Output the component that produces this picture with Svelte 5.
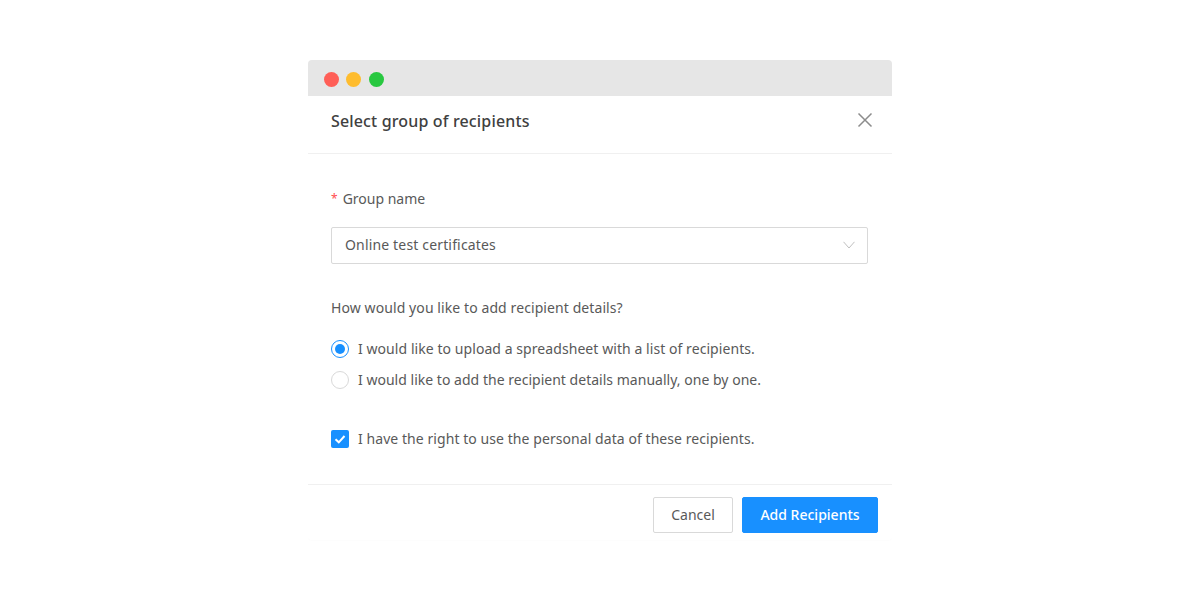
<script>
  const dots = ['red', 'amber', 'green'];
</script>

<div class="page">
  <div class="window">
    <div class="bar">
      {#each dots as d}
        <span class="dot {d}"></span>
      {/each}
    </div>
    <header class="head">
      <h1>Select group of recipients</h1>
      <svg class="close" width="16" height="16" viewBox="0 0 16 16" aria-hidden="true">
        <path d="M1.5 1.5 L14.5 14.5 M14.5 1.5 L1.5 14.5" stroke="#8c8c8c" stroke-width="1.5" fill="none" />
      </svg>
    </header>
    <main class="body">
      <div class="label"><span class="star">*</span>Group name</div>
      <div class="select">
        <span class="value">Online test certificates</span>
        <svg width="12" height="8" viewBox="0 0 12 8" aria-hidden="true">
          <path d="M0.5 0.8 L6 7 L11.5 0.8" stroke="#bfbfbf" stroke-width="1" fill="none" />
        </svg>
      </div>
      <p class="question">How would you like to add recipient details?</p>
      <div class="radios">
        <div class="option">
          <span class="radio on"></span>
          <span>I would like to upload a spreadsheet with a list of recipients.</span>
        </div>
        <div class="option tight">
          <span class="radio"></span>
          <span>I would like to add the recipient details manually, one by one.</span>
        </div>
      </div>
      <div class="option check-row">
        <span class="check">
          <svg width="18" height="18" viewBox="0 0 18 18" aria-hidden="true">
            <path d="M4.5 9.2 L7.8 12.3 L13.5 6" stroke="#fff" stroke-width="2" fill="none" />
          </svg>
        </span>
        <span class="check-text">I have the right to use the personal data of these recipients.</span>
      </div>
    </main>
    <footer class="foot">
      <button class="btn">Cancel</button>
      <button class="btn primary">Add Recipients</button>
    </footer>
  </div>
</div>

<style>
  :global(body) {
    margin: 0;
    background: #fff;
  }
  .page {
    width: 1200px;
    height: 600px;
    display: flex;
    justify-content: center;
    padding-top: 60px;
    box-sizing: border-box;
    font-family: "Noto Sans", sans-serif;
    font-size: 14px;
    color: #595959;
  }
  .window {
    width: 584px;
    height: 480px;
    background: #fff;
    border-radius: 4px;
    display: flex;
    flex-direction: column;
    box-shadow: 0 1px 2px rgba(0, 0, 0, 0.012);
  }
  .bar {
    height: 36px;
    flex: none;
    background: #e6e6e6;
    border-radius: 4px 4px 0 0;
    display: flex;
    align-items: center;
    gap: 7.5px;
    padding-left: 15.5px;
    padding-top: 2px;
    box-sizing: border-box;
  }
  .dot {
    width: 15px;
    height: 15px;
    border-radius: 50%;
  }
  .red { background: #ff5f57; }
  .amber { background: #febc2e; }
  .green { background: #28c840; }
  .head {
    height: 58px;
    flex: none;
    box-sizing: border-box;
    border-bottom: 1px solid #f0f0f0;
    display: flex;
    align-items: center;
    justify-content: space-between;
    padding: 0 19px 7px 23px;
  }
  .close {
    margin-bottom: 2px;
  }
  h1 {
    margin: 0;
    font-size: 16px;
    font-weight: 500;
    letter-spacing: 0.15px;
    color: #404040;
  }
  .body {
    flex: 1;
    padding: 35px 24px 0 23px;
  }
  .label {
    line-height: 20px;
    display: flex;
    align-items: center;
  }
  .star {
    color: #ff4d4f;
    margin-right: 5px;
    font-size: 12px;
  }
  .select {
    margin-top: 18px;
    height: 36.5px;
    box-sizing: border-box;
    border: 1px solid #d9d9d9;
    border-radius: 2px;
    display: flex;
    align-items: center;
    justify-content: space-between;
    padding: 0 12px 0 13px;
  }
  .value {
    padding-bottom: 2px;
    letter-spacing: 0.16px;
  }
  .question {
    margin: 34.5px 0 0;
    line-height: 20px;
    letter-spacing: 0.09px;
  }
  .radios {
    margin-top: 21px;
    display: flex;
    flex-direction: column;
    gap: 11px;
  }
  .option {
    display: flex;
    align-items: center;
    gap: 9px;
    line-height: 20px;
    letter-spacing: 0.065px;
  }
  .option.tight {
    letter-spacing: 0.02px;
  }
  .radio {
    width: 18px;
    height: 18px;
    box-sizing: border-box;
    border: 1px solid #d9d9d9;
    border-radius: 50%;
    display: flex;
    align-items: center;
    justify-content: center;
    flex: none;
  }
  .radio.on {
    border-color: #1890ff;
  }
  .radio.on::after {
    content: "";
    width: 10px;
    height: 10px;
    border-radius: 50%;
    background: #1890ff;
  }
  .check-row {
    margin-top: 38px;
  }
  .check-text {
    padding-top: 1px;
  }
  .check {
    width: 18px;
    height: 18px;
    background: #1890ff;
    border-radius: 2px;
    flex: none;
    display: flex;
  }
  .foot {
    height: 56px;
    flex: none;
    box-sizing: border-box;
    border-top: 1px solid #f0f0f0;
    display: flex;
    align-items: flex-start;
    justify-content: flex-end;
    gap: 9px;
    padding: 12px 14px 0 0;
  }
  .btn {
    height: 36px;
    width: 80px;
    background: #fff;
    border: 1px solid #d9d9d9;
    border-radius: 2px;
    font: inherit;
    color: #595959;
    padding: 0 0 2px;
  }
  .btn.primary {
    width: 136px;
    background: #1890ff;
    border-color: #1890ff;
    color: #fff;
    font-weight: 500;
  }
</style>
